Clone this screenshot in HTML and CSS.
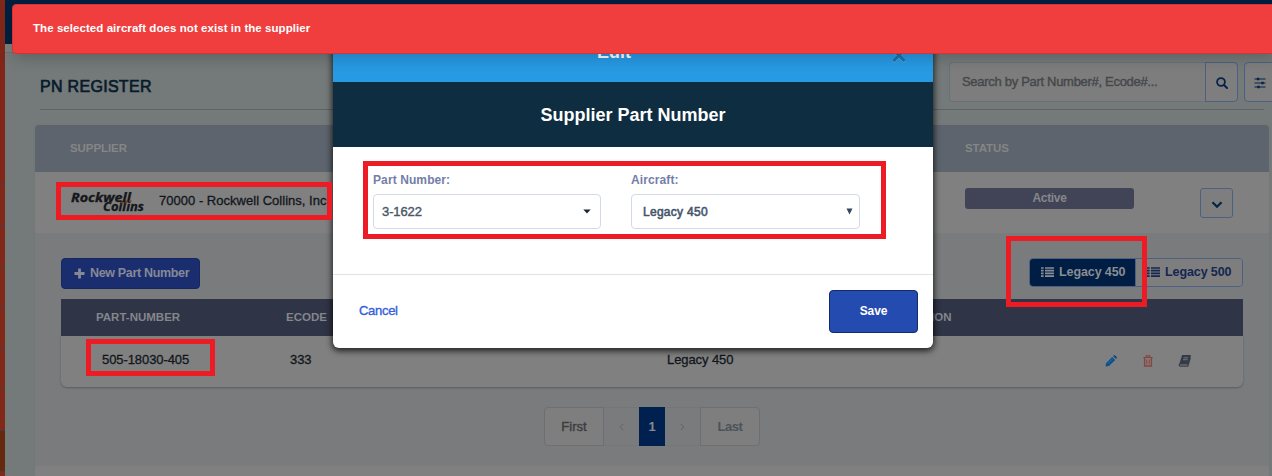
FILE: index.html
```html
<!DOCTYPE html>
<html lang="en">
<head>
<meta charset="utf-8">
<title>PN Register</title>
<link rel="stylesheet" href="styles.css">
</head>
<body>
<div class="app">
  <nav class="sidebar"><i></i><i></i><i></i><i></i><i></i><i></i><i class="deep"></i><i></i></nav>
  <div class="main">
    <div class="topbar"></div>
    <div class="strip"></div>
    <div class="content">
      <header class="page-head">
        <h1><span>PN REGISTER</span></h1>
        <div class="tools">
          <div class="search">
            <div class="search-input"><span class="t-search">Search by Part Number#, Ecode#...</span></div>
            <div class="search-btn"><svg width="12" height="12" viewBox="0 0 12 12"><circle cx="5" cy="5" r="3.9" fill="none" stroke="currentColor" stroke-width="1.8"/><path d="M8 8l3 3" stroke="currentColor" stroke-width="2" stroke-linecap="round"/></svg></div>
          </div>
          <div class="filter-btn"><svg width="12" height="12" viewBox="0 0 12 12"><path d="M0.500 2h11M.5 6h11M.5 10h11" stroke="currentColor" stroke-width="1.2"/><path d="M4 .8v2.400M8.500 4.800v2.400M4.500 8.800v2.400" stroke="currentColor" stroke-width="2.400"/></svg></div>
        </div>
      </header>
      <section class="card">
        <div class="card-head"><span class="t-th">SUPPLIER</span><span class="t-th">STATUS</span></div>
        <div class="supplier">
          <svg class="logo" width="76" height="24" viewBox="0 0 76 24"><text x="0" y="10" textLength="60" lengthAdjust="spacingAndGlyphs">Rockwell</text><text x="32" y="19" textLength="41" lengthAdjust="spacingAndGlyphs">Collins</text><path d="M50 10.500h2.500M54 10h2.500M58 9h2.500" stroke="#8c3c16" stroke-width="1.500"/></svg>
          <span class="supplier-name">70000 - Rockwell Collins, Inc</span>
          <div class="badge">Active</div>
          <div class="expand"><svg width="12" height="8" viewBox="0 0 12 8"><path d="M1.500 1.300L6 5.700l4.500-4.400" fill="none" stroke="currentColor" stroke-width="2.300"/></svg></div>
        </div>
        <div class="details">
          <div class="actions">
            <div class="new-btn"><svg width="11" height="11" viewBox="0 0 11 11"><path d="M5.500 .5v10M.5 5.500h10" stroke="currentColor" stroke-width="2.800"/></svg><span>New Part Number</span></div>
            <div class="group">
              <div class="seg on"><svg width="13" height="10" viewBox="0 0 13 10"><path d="M0 1h2.600M0 3.700h2.600M0 6.400h2.600M0 9.100h2.600M4 1h9M4 3.700h9M4 6.400h9M4 9.100h9" stroke="currentColor" stroke-width="1.700"/></svg><span>Legacy 450</span></div>
              <div class="seg"><svg width="13" height="10" viewBox="0 0 13 10"><path d="M0 1h2.600M0 3.700h2.600M0 6.400h2.600M0 9.100h2.600M4 1h9M4 3.700h9M4 6.400h9M4 9.100h9" stroke="currentColor" stroke-width="1.700"/></svg><span>Legacy 500</span></div>
            </div>
          </div>
          <div class="table">
            <div class="tr thead"><span class="t-pn">PART-NUMBER</span><span class="t-ec">ECODE</span><span></span><span class="t-desc">DESCRIPTION</span></div>
            <div class="tr row"><span class="pn">505-18030-405</span><span class="ec">333</span><span class="ac">Legacy 450</span>
              <span class="row-icons">
                <svg width="12" height="12" viewBox="0 0 12 12" fill="#064f90"><path d="M1 8.200L7.200 2l2.900 2.900-6.200 6.200L.6 11.500zM8 1.200L9 .3q.5-.4 1 0l1.800 1.800q.4.5 0 1l-.9 1z"/><path d="M3 8.500l4.600-4.600" stroke="#57788e" stroke-width=".7"/></svg>
                <svg width="10" height="12" viewBox="0 0 10 12" fill="none" stroke="#88443f"><path d="M.3 2.500h9.400M3.200 2V.8h3.600V2" stroke-width="1.200"/><path d="M1.600 3v8h6.800V3" stroke-width="1.400"/><path d="M3.800 4.500v5M6.200 4.500v5" stroke-width="1"/></svg>
                <svg width="13" height="12" viewBox="0 0 13 12"><path d="M4 .5h8.300L9.800 9H2.500q-1.300 0-1.300 1.100t1.200 1.100h7.400l2.600-8.600" fill="none" stroke="#343a46" stroke-width="1.200"/><path d="M4 .5h8.300L9.800 9H1.300z" fill="#343a46"/><path d="M5.500 2.800h4.600M5 4.700h4.600" stroke="#777b80" stroke-width=".9"/></svg>
              </span>
            </div>
          </div>
          <div class="pager"><div class="p-first">First</div><div class="p-nav"><svg width="5" height="8" viewBox="0 0 5 8"><path d="M4.200 1L1.200 4l3 3" fill="none" stroke="currentColor"/></svg></div><div class="p-cur">1</div><div class="p-nav"><svg width="5" height="8" viewBox="0 0 5 8"><path d="M.8 1l3 3-3 3" fill="none" stroke="currentColor"/></svg></div><div class="p-last">Last</div></div>
        </div>
      </section>
    </div>
  </div>
</div>

<div class="modal">
  <div class="modal-title"><span>Edit</span><svg class="close" width="14" height="15" viewBox="0 0 14 15"><path d="M1.500 3l11 11M12.500 3l-11 11" stroke="#4aa8e3" stroke-width="3"/><path d="M1.500 2l11 11M12.500 2l-11 11" stroke="#2070a5" stroke-width="2.800"/></svg></div>
  <div class="modal-sub"><span>Supplier Part Number</span></div>
  <div class="modal-body">
    <label class="field"><span class="l-pn">Part Number:</span><div class="select"><span class="v-pn">3-1622</span><svg width="8" height="5" viewBox="0 0 8 5"><path d="M.3.5h7.400L4 4.500z" fill="#1c2733"/></svg></div></label>
    <label class="field"><span class="l-ac">Aircraft:</span><div class="select native"><span class="v-ac">Legacy 450</span><svg width="7" height="7" viewBox="0 0 7 7"><path d="M.5.5h6l-3 6z" fill="#34465c"/></svg></div></label>
  </div>
  <div class="modal-foot"><span class="cancel">Cancel</span><div class="save"><span>Save</span></div></div>
</div>

<div class="toast"><span>The selected aircraft does not exist in the supplier</span></div>

<div class="mark m-supplier"></div>
<div class="mark m-form"></div>
<div class="mark m-tab"></div>
<div class="mark m-part"></div>
</body>
</html>
```

FILE: styles.css
```css
* { box-sizing: border-box; }
body { margin: 0; width: 1272px; height: 476px; overflow: hidden; position: relative; background: #747979; font: 13px/1 "Liberation Sans", Arial, sans-serif; color: #12161c; }
span { white-space: nowrap; }
svg { display: block; flex: none; }
.app { display: flex; height: 476px; overflow: hidden; }
.sidebar { width: 5px; flex: none; background: #80271a; padding-top: 184px; display: flex; flex-direction: column; }
.sidebar i { height: 41px; flex: none; border-top: 1px solid #4b3a3c; background: #802918; }
.sidebar i.deep { background: #65290d; }
.main { width: 1267px; flex: none; }
.topbar { height: 44px; background: #00203f; }
.strip { height: 9px; background: #7d7f7f; border-bottom: 1px solid #696e6f; }
.content { padding: 0 3px 0 30px; height: 423px; }
.page-head { height: 57px; margin: 0 5px; border-bottom: 1px solid #5d6367; display: flex; justify-content: space-between; }
h1 { margin: 26px 0 0; font-size: 16px; line-height: 16px; font-weight: normal; letter-spacing: .3px; -webkit-text-stroke: .65px; color: #081b2b; }
.tools { display: flex; width: 315px; flex: none; margin-top: 9px; height: 40px; gap: 6px; }
.search { display: flex; width: 289px; flex: none; }
.search-input { width: 256px; border: 1px solid #6a7079; border-right: 0; border-radius: 4px 0 0 4px; background: #7d7d7d; padding: 12px 0 0 12px; color: #45484b; -webkit-text-stroke: .4px; letter-spacing: -.3px; }
.search-btn, .filter-btn, .expand { border: 1px solid #4c6084; background: #7e7e7e; color: #072248; display: flex; align-items: center; justify-content: center; }
.search-btn { width: 33px; border-radius: 0 4px 4px 0; padding-top: 2px; }
.filter-btn { width: 33px; flex: none; border-radius: 4px; padding: 2px 1px 0 0; }
.card { margin-top: 15px; height: 351px; background: #808080; border-radius: 4px 4px 0 0; box-shadow: 0 0 2px #6e7376; }
.card-head { height: 47px; border-radius: 4px 4px 0 0; background: #5d646d; color: #858686; display: grid; grid-template-columns: 895px 1fr; padding: 18px 0 0 35px; font-size: 11.500px; font-weight: bold; letter-spacing: -.08px; }
.supplier { height: 61px; display: flex; padding-left: 36px; }
.logo { margin-top: 20px; fill: #15171b; stroke: #15171b; stroke-width: .3px; }
.logo text { font: italic bold 12px "Open Sans", "Noto Sans", sans-serif; }
.supplier-name { margin: 22px 0 0 12px; width: 180px; -webkit-text-stroke: .3px; letter-spacing: .02px; }
.badge { margin: 16px 0 0 626px; width: 169px; height: 21px; flex: none; background: #404456; border-radius: 3px; color: #86878a; font-weight: bold; font-size: 12px; line-height: 21px; text-align: center; letter-spacing: -.3px; }
.expand { margin: 16px 0 0 66px; width: 33px; height: 30px; flex: none; border-radius: 3px; padding-top: 4px; }
.details { height: 233px; background: #797b7d; padding: 25px 26px 0; }
.actions { display: flex; justify-content: space-between; height: 41px; }
.new-btn { width: 139px; height: 31px; border-radius: 4px; border: 1px solid #142761; background: #1a2d6e; color: #858996; display: flex; align-items: center; gap: 5px; padding-left: 12px; font-weight: bold; font-size: 12.500px; letter-spacing: -.33px; }
.group { display: flex; width: 214px; height: 29px; border: 1px solid #4c6084; border-radius: 4px; overflow: hidden; }
.seg { width: 106px; display: flex; align-items: center; gap: 5px; padding-left: 11px; font-weight: bold; font-size: 12.500px; letter-spacing: -.1px; background: #7e7e7e; color: #132750; }
.seg svg { margin-bottom: 2px; }
.seg.on { background: #001e43; color: #8a8d93; border-right: 1px solid #4c6084; }
.tr { display: grid; grid-template-columns: 190px 380px 207px 1fr; padding-left: 35px; }
.thead { height: 37px; background: #2f3446; color: #84868c; font-size: 11.500px; font-weight: bold; padding-top: 13px; letter-spacing: 0; }
.row { height: 51px; background: #808080; border-radius: 0 0 6px 6px; box-shadow: 0 1px 2px #555c68; padding-top: 17px; -webkit-text-stroke: .3px; letter-spacing: -.08px; }
.pn { margin-left: 6px; }
.ec { margin-left: 4px; }
.ac { margin-left: 1px; }
.row-icons { display: flex; margin-left: 232px; padding-top: 2px; gap: 26px; }
.row-icons svg:last-child { margin-left: -1px; }
.pager { width: 216px; height: 39px; margin: 20px auto 0 483px; display: flex; color: #3b3d40; font-weight: bold; line-height: 37px; text-align: center; }
.p-first { width: 60px; border: 1px solid #6d6f72; background: #7e7e7e; border-radius: 4px 0 0 4px; font-weight: normal; -webkit-text-stroke: .4px; }
.p-nav { width: 35px; border: 1px solid #747678; border-width: 1px 0; display: flex; align-items: center; justify-content: center; color: #606469; }
.p-cur { width: 26px; background: #00214f; color: #85898f; line-height: 39px; }
.p-last { width: 60px; border: 1px solid #6d6f72; background: #7e7e7e; border-radius: 0 4px 4px 0; color: #4b535a; letter-spacing: -.4px; }

.modal { position: absolute; left: 333px; top: 22px; width: 600px; height: 326px; background: #fff; border-radius: 6px; box-shadow: 0 2px 6px 1px rgba(0,0,0,.75); overflow: hidden; }
.modal-title { height: 60px; background: #279ae4; color: #fff; display: flex; align-items: center; justify-content: center; font-weight: bold; font-size: 18px; padding-right: 38px; position: relative; }
.close { position: absolute; right: 27px; top: 26px; }
.modal-sub { height: 65px; background: #0f2d40; color: #fff; display: flex; align-items: center; justify-content: center; font-size: 18px; font-weight: bold; }
.modal-body { height: 128px; border-bottom: 1px solid #e2e2e2; display: flex; gap: 30px; padding: 27px 40px 0; }
.field { width: 228px; color: #737ea9; font-size: 12px; font-weight: bold; letter-spacing: .1px; }
.select { margin-top: 8px; height: 35px; border: 1px solid #d3dae6; border-radius: 4px; display: flex; align-items: center; justify-content: space-between; padding: 0 9px 0 8px; color: #4b5768; font-weight: normal; font-size: 13px; letter-spacing: -.1px; -webkit-text-stroke: .4px; }
.native { padding: 0 6px 0 11px; font-size: 12px; letter-spacing: .28px; color: #43546b; width: 229px; -webkit-text-stroke: .55px; }
.modal-foot { display: flex; justify-content: space-between; padding: 15px 15px 0 26px; }
.cancel { color: #3560dc; margin-top: 14px; font-size: 13px; letter-spacing: -.3px; -webkit-text-stroke: .35px; }
.save { width: 89px; height: 43px; background: #244bb0; border: 1px solid #152a68; border-radius: 4px; color: #fff; font-weight: bold; font-size: 12px; line-height: 41px; text-align: center; letter-spacing: -.1px; }
.toast { position: absolute; left: 12px; top: 4px; width: 1266px; height: 50px; background: #f03d3d; border: 1px solid #d63237; border-radius: 4px; box-shadow: 0 6px 16px -2px rgba(0,0,0,.2); color: #fff; font-size: 11.500px; font-weight: bold; letter-spacing: .06px; padding: 18px 20px; }
.mark { position: absolute; border: 5px solid #ed1c24; }
.m-supplier { left: 56px; top: 182px; width: 276px; height: 38px; }
.m-form { left: 363px; top: 161px; width: 523px; height: 78px; }
.m-tab { left: 1006px; top: 236px; width: 141px; height: 71px; }
.m-part { left: 86px; top: 339px; width: 129px; height: 37px; }
```
